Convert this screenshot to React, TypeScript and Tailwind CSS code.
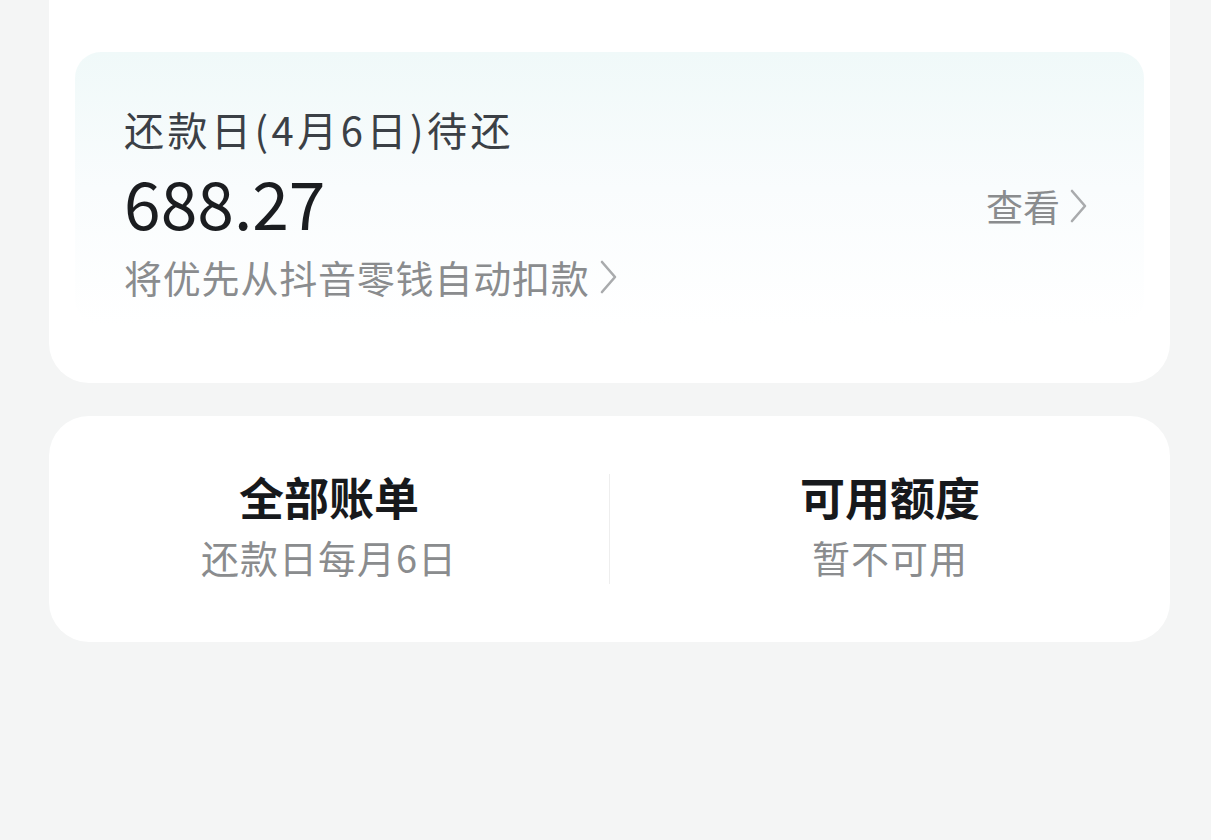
const font = { fontFamily: '"Noto Sans CJK SC", "Noto Sans", sans-serif' };

function Chevron({ className }: { className?: string }) {
  return (
    <svg viewBox="0 0 20 36" className={className} fill="none" stroke="currentColor" strokeWidth="2.6" strokeLinecap="round" strokeLinejoin="round">
      <path d="M4 3 L17 18 L4 33" />
    </svg>
  );
}

export default function App() {
  return (
    <div className="min-h-screen w-full bg-[#f4f5f5] pl-[49px] pr-[41px]" style={font}>
      {/* repayment card */}
      <div className="h-[383px] rounded-b-[40px] bg-white px-[26px] pt-[52px]">
        <div className="flex h-[273px] items-start justify-between rounded-[26px] bg-gradient-to-b from-[#f0f9f9] via-[#f9fcfd] to-white pl-[49px] pr-[56px] pt-[47px]">
          <div className="flex flex-col">
            <div className="text-[40px] tracking-[3.5px] leading-[60px] text-[#3b4046]">还款日(4月6日)待还</div>
            <div className="mt-[4px] text-[66px] leading-[76px] text-[#1b1d20]">688.27</div>
            <div className="mt-[8px] flex items-center text-[38px] tracking-[0.8px] leading-[60px] text-[#8a8c8e]">
              <span>将优先从抖音零钱自动扣款</span>
              <Chevron className="ml-[8px] h-[36px] w-[20px] text-[#a9abad]" />
            </div>
          </div>
          <div className="mt-[82px] flex items-center text-[37px] leading-[50px] text-[#8a8c8e]">
            <span>查看</span>
            <Chevron className="ml-[8px] h-[36px] w-[20px] text-[#a9abad]" />
          </div>
        </div>
      </div>

      {/* bills and credit */}
      <div className="mt-[33px] flex h-[226px] items-center rounded-[40px] bg-white">
        <div className="flex flex-1 flex-col items-center">
          <div className="mt-[-6px] text-[45px] font-bold leading-[60px] text-[#17191c]">全部账单</div>
          <div className="mt-[2px] text-[38px] tracking-[1px] leading-[56px] text-[#8a8c8e]">还款日每月6日</div>
        </div>
        <div className="h-[110px] w-px bg-[#eeeeee]" />
        <div className="flex flex-1 flex-col items-center">
          <div className="mt-[-6px] text-[45px] font-bold leading-[60px] text-[#17191c]">可用额度</div>
          <div className="mt-[2px] text-[38px] tracking-[1px] leading-[56px] text-[#8a8c8e]">暂不可用</div>
        </div>
      </div>
    </div>
  );
}
